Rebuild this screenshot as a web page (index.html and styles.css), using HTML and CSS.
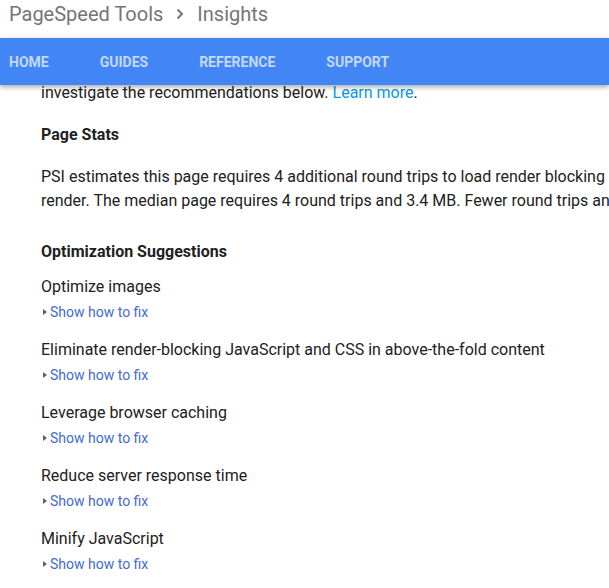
FILE: index.html
```html
<!DOCTYPE html>
<html>
<head>
<meta charset="utf-8">
<link rel="stylesheet" href="styles.css">
</head>
<body>
<header class="top">
  <span class="crumb">PageSpeed Tools</span>
  <svg class="chev" width="10" height="14" viewBox="0 0 10 14"><path d="M2.5 2.5 L7 7 L2.5 11.5" fill="none" stroke="#757575" stroke-width="2"/></svg>
  <span class="crumb">Insights</span>
</header>
<nav class="nav">
  <a class="nav-item">HOME</a>
  <a class="nav-item">GUIDES</a>
  <a class="nav-item">REFERENCE</a>
  <a class="nav-item">SUPPORT</a>
</nav>
<main class="content">
  <p class="line intro">investigate the recommendations below. <a class="learn">Learn more</a>.</p>
  <h3 class="heading stats">Page Stats</h3>
  <p class="para">
    <span class="line">PSI estimates this page requires 4 additional round trips to load render blocking resources and 0.9 MB to fully</span>
    <span class="line">render. The median page requires 4 round trips and 3.4 MB. Fewer round trips and smaller sizes allow the page to load faster.</span>
  </p>
  <h3 class="heading opt">Optimization Suggestions</h3>
  <div class="rules">
    <div class="rule">
      <div class="rule-title">Optimize images</div>
      <div class="fix"><span class="tri"></span><a class="fix-link">Show how to fix</a></div>
    </div>
    <div class="rule">
      <div class="rule-title">Eliminate render-blocking JavaScript and CSS in above-the-fold content</div>
      <div class="fix"><span class="tri"></span><a class="fix-link">Show how to fix</a></div>
    </div>
    <div class="rule">
      <div class="rule-title">Leverage browser caching</div>
      <div class="fix"><span class="tri"></span><a class="fix-link">Show how to fix</a></div>
    </div>
    <div class="rule">
      <div class="rule-title">Reduce server response time</div>
      <div class="fix"><span class="tri"></span><a class="fix-link">Show how to fix</a></div>
    </div>
    <div class="rule">
      <div class="rule-title">Minify JavaScript</div>
      <div class="fix"><span class="tri"></span><a class="fix-link">Show how to fix</a></div>
    </div>
  </div>
</main>
</body>
</html>
```
FILE: styles.css
```css
html, body {
  margin: 0;
  padding: 0;
  overflow: hidden;
  background: #fff;
  font-family: Roboto, "Liberation Sans", sans-serif;
}
.top {
  height: 38px;
  display: flex;
  align-items: center;
  padding-left: 9px;
  gap: 12px;
  box-sizing: border-box;
  padding-bottom: 10px;
}
.crumb {
  font-size: 20px;
  color: #757575;
}
.nav {
  position: relative;
  z-index: 2;
  height: 47px;
  background: #4285f4;
  display: flex;
  align-items: center;
  gap: 51px;
  padding-left: 9px;
  box-shadow: 0 2px 5px rgba(0,0,0,0.35);
}
.nav-item {
  font-size: 14px;
  font-weight: 700;
  color: rgba(255,255,255,0.7);
}
.content {
  padding-left: 41px;
  color: #212121;
  font-size: 16px;
  white-space: nowrap;
}
.line { display: block; }
.intro {
  margin: 0;
  line-height: 16px;
}
.learn { color: #039be5; }
.heading {
  margin: 0;
  font-size: 16px;
  font-weight: 700;
  line-height: 24px;
}
.stats { margin-top: 22px; }
.para {
  margin: 18px 0 0;
  line-height: 24px;
}
.opt { margin-top: 27px; }
.rules { margin-top: 11px; }
.rule { height: 63px; }
.rule-title { line-height: 24px; }
.fix {
  display: flex;
  align-items: center;
  line-height: 26px;
  font-size: 14px;
}
.tri {
  width: 0;
  height: 0;
  border-top: 3.5px solid transparent;
  border-bottom: 3.5px solid transparent;
  border-left: 4px solid #616161;
  margin-left: 2px;
  margin-right: 3px;
}
.fix-link { color: #3f6ad8; }
```
